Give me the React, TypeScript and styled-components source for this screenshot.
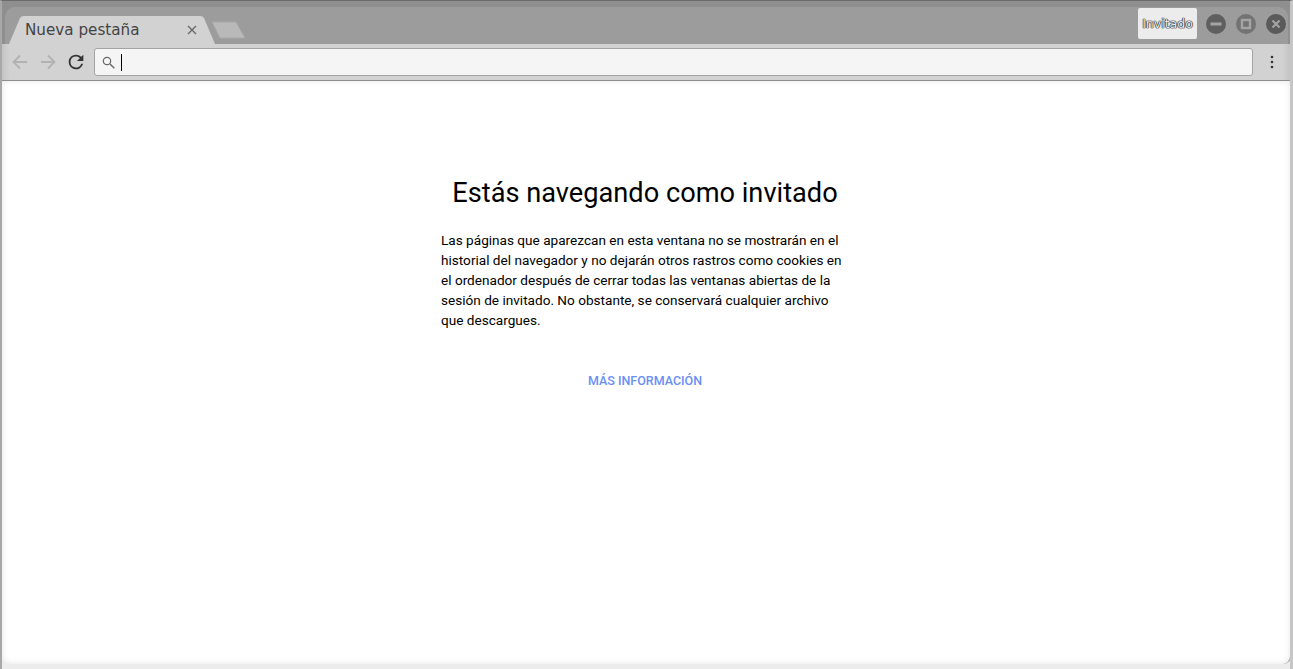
import React from "react";
import styled, { createGlobalStyle } from "styled-components";

const Global = createGlobalStyle`
  html, body { margin: 0; padding: 0; width: 1293px; height: 669px; overflow: hidden; background: #fff; }
  #root { width: 100%; height: 100%; }
  * { box-sizing: border-box; }
`;

const Screen = styled.div`
  width: 1293px; height: 669px; display: flex; flex-direction: column;
  font-family: "Roboto", sans-serif; overflow: hidden;
  background: #ececec;
  border-top: 1px solid #6a6a6a;
  border-left: 2px solid #a8a8a8;
  border-right: 3px solid #c6c6c6;
`;
const TabStrip = styled.div`
  position: relative; height: 43px; flex: none; display: flex; align-items: flex-end; justify-content: space-between;
  background: #8f8f8f; margin: 0 -3px 0 -2px;
  padding: 0 7px 0 9px;
  &::before {
    content: ""; position: absolute; left: 5px; right: 5px; top: 6px; bottom: 0;
    background: #9c9c9c; border-radius: 10px 10px 0 0;
  }
`;
const Tabs = styled.div`position: relative; display: flex; align-items: flex-end; gap: 2px;`;
const Tab = styled.div`
  position: relative; width: 206px; height: 28px; flex: none; padding: 0 0 0 16px; display: flex; align-items: center; justify-content: space-between;
`;
const TabShape = styled.svg`position: absolute; inset: 0;`;
const TabLabel = styled.span`
  position: relative; font: 15.2px "DejaVu Sans", sans-serif; color: #444;
`;
const TabClose = styled.svg`position: relative; margin-right: 18px;`;
const NewTab = styled.svg`margin-bottom: 5px; margin-left: -5px;`;
const Controls = styled.div`position: relative; display: flex; align-items: center; align-self: flex-start; margin-top: 7px;`;
const Guest = styled.div`
  width: 59px; height: 31px; background: #ececec; border-radius: 2px; display: flex; align-items: center; justify-content: center;
  font: 12.5px "DejaVu Sans", sans-serif; color: #ececec; margin-right: 9px;
  text-shadow: 0 0 1px #222, 0 0 1px #222, 0 0 1px #222, 0 0 1px #222;
`;
const WinBtn = styled.svg`margin-right: 10px; flex: none; &:last-child { margin-right: 0; }`;
const Toolbar = styled.div`
  height: 37px; flex: none; display: flex; align-items: center; padding: 0 10px 0 8px; border-bottom: 1px solid #8e8e8e;
  background: linear-gradient(90deg, #c4c4c4, #d2d2d2 8px, #d2d2d2 calc(100% - 8px), #c4c4c4);
  box-shadow: 1px 0 0 #9a9a9a;
`;
const NavIcon = styled.svg`flex: none; margin-right: 8px;`;
const Reload = styled.svg`flex: none; margin: 0 7px 0 -1px;`;
const Omnibox = styled.div`
  flex: 1; height: 28px; background: #f5f5f5; border: 1px solid #a3a3a3; border-radius: 3px; display: flex; align-items: center; padding-left: 7px; gap: 6px;
`;
const Caret = styled.span`width: 1px; height: 17px; background: #000;`;
const MenuIcon = styled.svg`margin-left: 11px; flex: none;`;
const Viewport = styled.main`
  flex: 1; margin: 0 0 5px 0; background: #fff; display: flex; flex-direction: column; align-items: center;
  border-radius: 0 0 8px 8px; box-shadow: inset 0 0 6px #e6e6e6, 1px 0 0 #9a9a9a;
`;
const Title = styled.h1`
  margin: 94px 0 0; font: 400 27.2px/36px "Roboto", sans-serif; color: #000; transform: translateX(-1px);
`;
const Body = styled.p`
  margin: 19px 0 0; width: 406px; font: 400 13.6px/20px "Roboto", sans-serif; color: #000; transform: translateX(-2px);
`;
const More = styled.a`
  margin-top: 41px; font: 500 12.5px/20px "Roboto", sans-serif; color: #6a8ff5; transform: translateX(-1px);
`;

export default function App() {
  return (
    <Screen>
      <Global />
      <TabStrip>
        <Tabs>
          <Tab>
            <TabShape width="206" height="28" viewBox="0 0 206 28">
              <path d="M0 28 L11 2 Q12 0 15 0 H191 Q194 0 195 2 L206 28 Z" fill="#d2d2d2" />
            </TabShape>
            <TabLabel>Nueva pestaña</TabLabel>
            <TabClose width="10" height="10" viewBox="0 0 10 10"><path d="M1 1L9 9M9 1L1 9" stroke="#666" strokeWidth="1.3" /></TabClose>
          </Tab>
          <NewTab width="33" height="18" viewBox="0 0 33 18"><path d="M0 1 H24 L33 17 H8 Z" fill="#b9b9b9" stroke="#a8a8a8" strokeLinejoin="round" /></NewTab>
        </Tabs>
        <Controls>
          <Guest>Invitado</Guest>
          <WinBtn width="20" height="20" viewBox="0 0 20 20"><circle cx="10" cy="10" r="10" fill="#5f5f5f" /><rect x="4.5" y="8.5" width="11" height="3" fill="#a5a5a5" /></WinBtn>
          <WinBtn width="20" height="20" viewBox="0 0 20 20"><circle cx="10" cy="10" r="10" fill="#737373" /><rect x="6" y="6" width="8" height="8" fill="none" stroke="#a5a5a5" strokeWidth="2.4" /></WinBtn>
          <WinBtn width="20" height="20" viewBox="0 0 20 20"><circle cx="10" cy="10" r="10" fill="#5a5a5a" /><path d="M6.5 6.5L13.5 13.5M13.5 6.5L6.5 13.5" stroke="#a5a5a5" strokeWidth="2" /></WinBtn>
        </Controls>
      </TabStrip>
      <Toolbar>
        <NavIcon width="20" height="20" viewBox="0 0 20 20"><path d="M17 10H4M10 3.5L3.5 10L10 16.5" fill="none" stroke="#b2b2b2" strokeWidth="1.8" /></NavIcon>
        <NavIcon width="20" height="20" viewBox="0 0 20 20"><path d="M3 10H16M10 3.5L16.5 10L10 16.5" fill="none" stroke="#b2b2b2" strokeWidth="1.8" /></NavIcon>
        <Reload width="22" height="22" viewBox="0 0 24 24"><path fill="#333" d="M17.65 6.35A7.96 7.96 0 0 0 12 4a8 8 0 1 0 7.73 10h-2.08A6 6 0 1 1 12 6c1.66 0 3.14.69 4.22 1.78L13 11h7V4l-2.35 2.35z" /></Reload>
        <Omnibox>
          <svg width="13" height="13" viewBox="0 0 13 13"><circle cx="5" cy="5" r="3.7" fill="none" stroke="#666" strokeWidth="1.2" /><path d="M8 8L12.3 12.3" stroke="#666" strokeWidth="1.4" /></svg>
          <Caret />
        </Omnibox>
        <MenuIcon width="16" height="16" viewBox="0 0 16 16"><circle cx="8" cy="3" r="1.3" fill="#333" /><circle cx="8" cy="8" r="1.3" fill="#333" /><circle cx="8" cy="13" r="1.3" fill="#333" /></MenuIcon>
      </Toolbar>
      <Viewport>
        <Title>Estás navegando como invitado</Title>
        <Body>Las páginas que aparezcan en esta ventana no se mostrarán en el historial del navegador y no dejarán otros rastros como cookies en el ordenador después de cerrar todas las ventanas abiertas de la sesión de invitado. No obstante, se conservará cualquier archivo que descargues.</Body>
        <More>MÁS INFORMACIÓN</More>
      </Viewport>
    </Screen>
  );
}
